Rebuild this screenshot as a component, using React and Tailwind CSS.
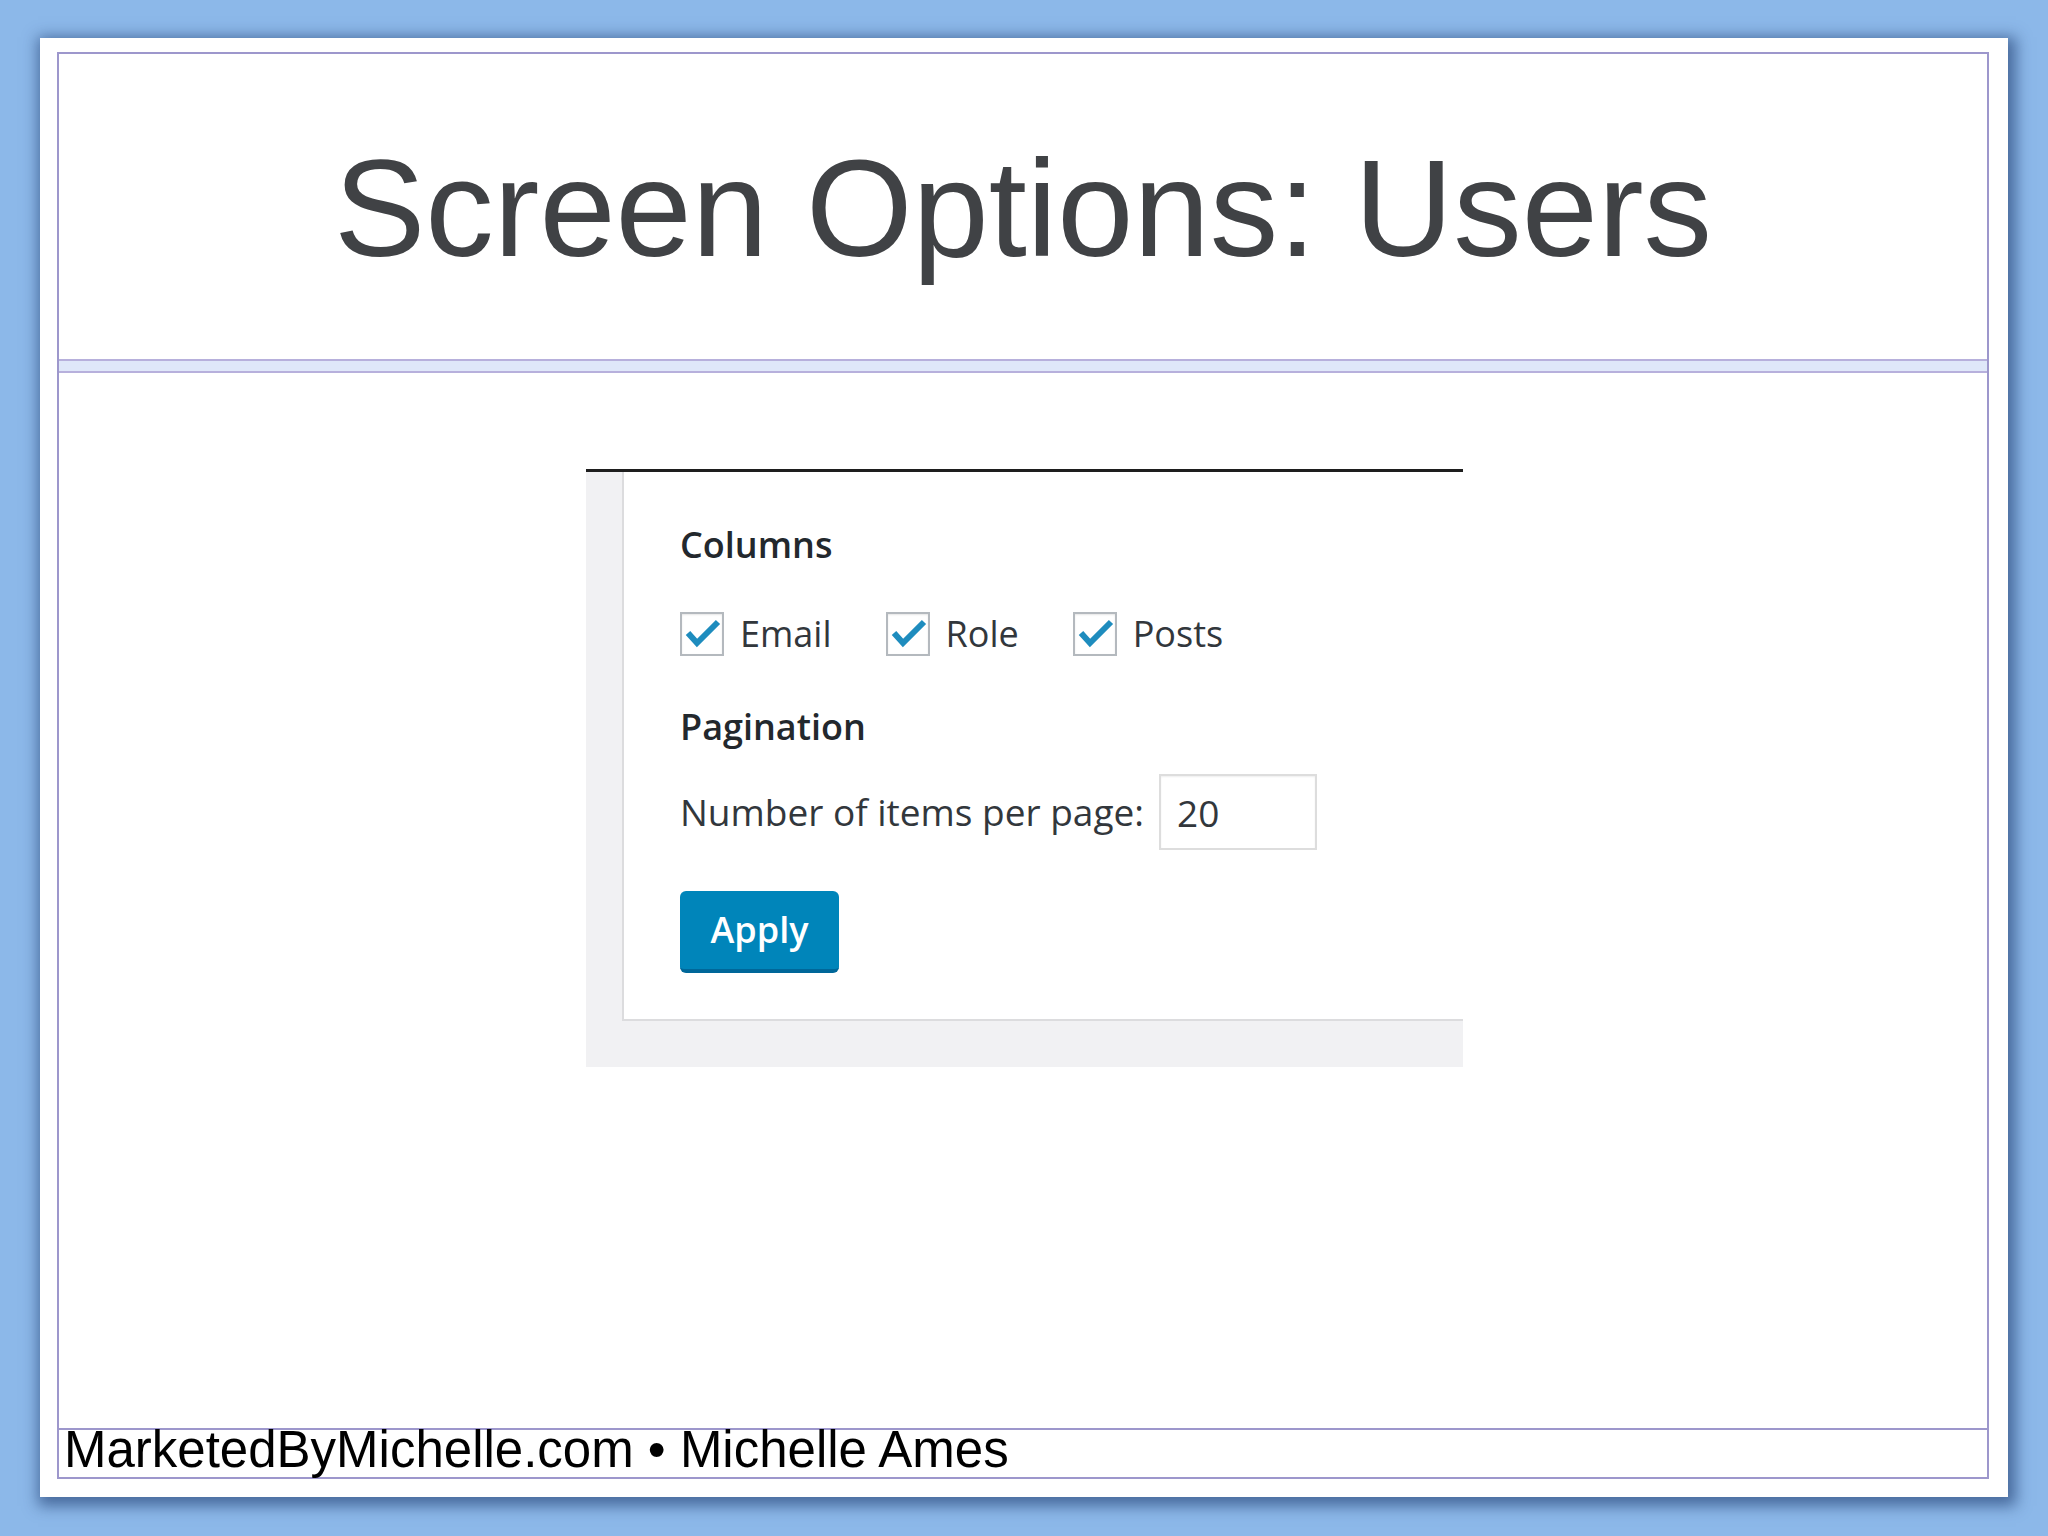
import React, { useState } from 'react';

const CheckItem = ({ label, checked, onToggle }) => (
  <label className="flex items-center mr-[54px] cursor-pointer">
    <span className="w-[44px] h-[44px] border-2 border-[#b4b9be] bg-white flex items-center justify-center shadow-[inset_0_1px_2px_rgba(0,0,0,0.1)]">
      {checked && (
        <svg width="40" height="40" viewBox="0 0 40 40">
          <path d="M6 19 L15 29 L36 8" fill="none" stroke="#1e8cbe" strokeWidth="6" strokeLinejoin="miter" />
        </svg>
      )}
    </span>
    <input type="checkbox" className="hidden" checked={checked} onChange={onToggle} />
    <span className="ml-[16px] text-[36px] leading-[50px] text-[#32373c]">{label}</span>
  </label>
);

const App = () => {
  const [cols, setCols] = useState({ Email: true, Role: true, Posts: true });
  const [perPage, setPerPage] = useState('20');

  return (
    <div className="w-[2048px] h-[1536px] bg-[#8cb8e9] pt-[38px] pl-[40px] overflow-hidden">
      <div className="w-[1968px] h-[1459px] bg-white pt-[14px] pl-[17px] pr-[19px] pb-[18px] shadow-[3px_4px_14px_5px_rgba(35,65,115,0.65)]">
        <div className="h-full border-2 border-[#9d97cc] flex flex-col" style={{ fontFamily: '"Liberation Sans", Arial, sans-serif' }}>
          {/* title */}
          <div className="h-[305px] flex items-center justify-center pt-[4px]">
            <h1 className="text-[137px] leading-none text-[#404245]">Screen Options: Users</h1>
          </div>
          <div className="h-[14px] bg-[#dfe7f9] border-t-2 border-b-2 border-[#b7b0dc]"></div>

          {/* body */}
          <div className="flex-1 pt-[96px] pl-[527px]">
            <div className="w-[877px] h-[598px] border-t-[3px] border-[#1e1e1e] bg-[#f1f1f3] pl-[36px] pb-[46px]" style={{ fontFamily: '"Open Sans", sans-serif' }}>
              <div className="h-full bg-white border-l-2 border-b-2 border-[#dcdcde] pl-[56px] pt-[48px]">
                <h5 className="text-[36px] leading-[50px] font-semibold text-[#23282d]">Columns</h5>
                <div className="flex items-center h-[50px] mt-[39px]">
                  {Object.keys(cols).map((k) => (
                    <CheckItem key={k} label={k} checked={cols[k]} onToggle={() => setCols({ ...cols, [k]: !cols[k] })} />
                  ))}
                </div>
                <h5 className="text-[36px] leading-[50px] font-semibold text-[#23282d] mt-[43px]">Pagination</h5>
                <div className="flex items-center mt-[22px]">
                  <span className="text-[37px] leading-[50px] text-[#32373c]">Number of items per page:</span>
                  <input
                    type="text"
                    className="ml-[15px] w-[158px] h-[76px] border-2 border-[#dddddd] pl-[16px] text-[37px] text-[#32373c] outline-none shadow-[inset_0_1px_2px_rgba(0,0,0,0.07)]"
                    value={perPage}
                    onChange={(e) => setPerPage(e.target.value)}
                  />
                </div>
                <button className="mt-[41px] w-[159px] h-[82px] rounded-[6px] bg-[#0085ba] border-b-[4px] border-[#006799] text-white text-[36px] font-semibold leading-none">
                  Apply
                </button>
              </div>
            </div>
          </div>

          {/* footer */}
          <div className="h-[49px] border-t-2 border-[#9d97cc] pl-[5px]">
            <span className="text-[51px] leading-[40px] text-black whitespace-nowrap">MarketedByMichelle.com • Michelle Ames</span>
          </div>
        </div>
      </div>
    </div>
  );
};

export default App;
